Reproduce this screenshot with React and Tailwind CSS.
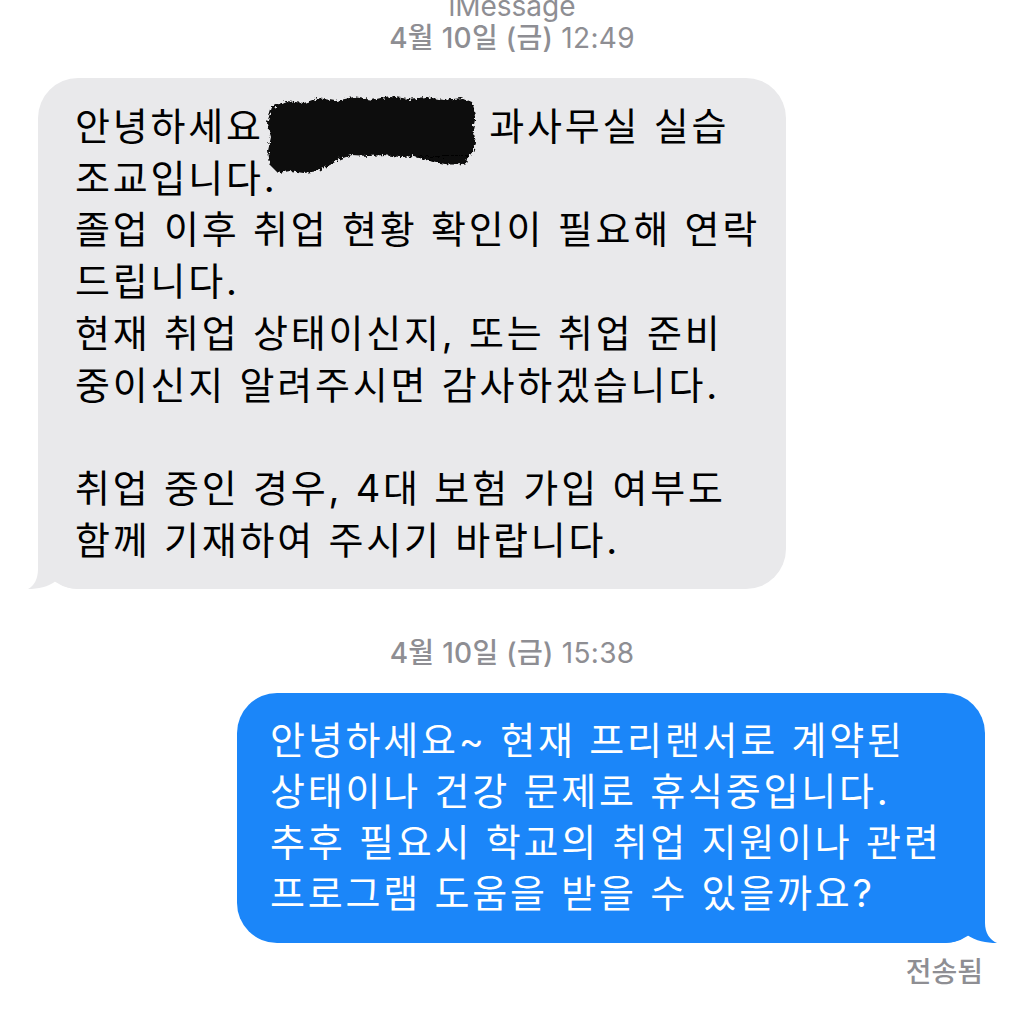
import React from 'react';

const FONT = { fontFamily: 'Inter, "Noto Sans CJK KR", "Noto Sans", sans-serif' };

// Timestamp line between bubbles
const Stamp = ({ day, time, className = '' }) => (
  <div className={`text-center text-[28px] leading-[30px] tracking-[0.3px] text-[#8e8e93] ${className}`}>
    <span className="font-medium">{day}</span> <span>{time}</span>
  </div>
);

// Black marker scribble over the redacted part
const Scribble = () => (
  <svg className="absolute left-[228px] top-[15px]" width="220" height="84" viewBox="0 0 220 84">
    <defs>
      <filter id="rough" x="-10%" y="-10%" width="120%" height="120%">
        <feTurbulence type="fractalNoise" baseFrequency="0.35" numOctaves="2" seed="3" />
        <feDisplacementMap in="SourceGraphic" scale="6" />
      </filter>
    </defs>
    <g filter="url(#rough)" fill="#070707">
      <path d="M6 14 L20 8 L38 10 L52 5 L70 8 L88 4 L106 7 L124 3 L142 6 L160 4 L178 7 L196 5 L206 9 L210 22 L207 36 L210 50 L206 62 L196 68 L184 66 L172 70 L160 67 L148 63 L134 64 L118 62 L102 63 L86 62 L74 66 L64 72 L52 78 L38 80 L24 78 L12 80 L4 72 L2 58 L5 44 L1 30 Z" />
      <path d="M150 64 C170 70 186 74 200 70 L202 62 Z" />
    </g>
  </svg>
);

const GrayTail = () => (
  <svg className="absolute left-[-10px] bottom-0" width="50" height="48" viewBox="0 0 50 48">
    <path d="M10 0 L10 28 C10 38 6 45 0 48 C10 48 20 46 28 40 C34 45 42 48 50 48 L50 0 Z" fill="#e9e9eb" />
  </svg>
);

const BlueTail = () => (
  <svg className="absolute right-[-12px] bottom-0" width="52" height="48" viewBox="0 0 52 48">
    <path d="M40 0 L40 28 C40 38 45 45 52 48 C41 48 31 46 22 40 C16 45 8 48 0 48 L0 0 Z" fill="#1b86f9" />
  </svg>
);

export default function App() {
  return (
    <div className="w-[1024px] h-[1010px] bg-white overflow-hidden" style={FONT}>
      <div className="text-center text-[28px] leading-[30px] text-[#8e8e93] mt-[-9px]">iMessage</div>
      <Stamp day="4월 10일 (금)" time="12:49" className="mt-[2px]" />

      <div className="relative ml-[38px] mt-[25px] w-[748px] rounded-[40px] bg-[#e9e9eb] pl-[37px] pt-[23px] pb-[23px] text-[38px] leading-[51.7px] tracking-[2.8px] text-black whitespace-nowrap">
        <GrayTail />
        <div className="relative">
          안녕하세요<span className="inline-block w-[212px]"></span> 과사무실 실습<br />
          조교입니다.<br />
          졸업 이후 취업 현황 확인이 필요해 연락<br />
          드립니다.<br />
          현재 취업 상태이신지, 또는 취업 준비<br />
          중이신지 알려주시면 감사하겠습니다.<br />
          <br />
          취업 중인 경우, 4대 보험 가입 여부도<br />
          함께 기재하여 주시기 바랍니다.
        </div>
        <Scribble />
      </div>

      <Stamp day="4월 10일 (금)" time="15:38" className="mt-[49px]" />

      <div className="relative ml-[237px] mt-[25px] w-[748px] rounded-[40px] bg-[#1b86f9] pl-[33px] pt-[22px] pb-[24px] text-[38px] leading-[51px] tracking-[2.8px] text-white whitespace-nowrap">
        <BlueTail />
        <div className="relative">
          안녕하세요~ 현재 프리랜서로 계약된<br />
          상태이나 건강 문제로 휴식중입니다.<br />
          추후 필요시 학교의 취업 지원이나 관련<br />
          프로그램 도움을 받을 수 있을까요?
        </div>
      </div>

      <div className="mt-[14px] pr-[41px] text-right text-[28px] leading-[30px] font-medium text-[#8e8e93]">전송됨</div>
    </div>
  );
}
